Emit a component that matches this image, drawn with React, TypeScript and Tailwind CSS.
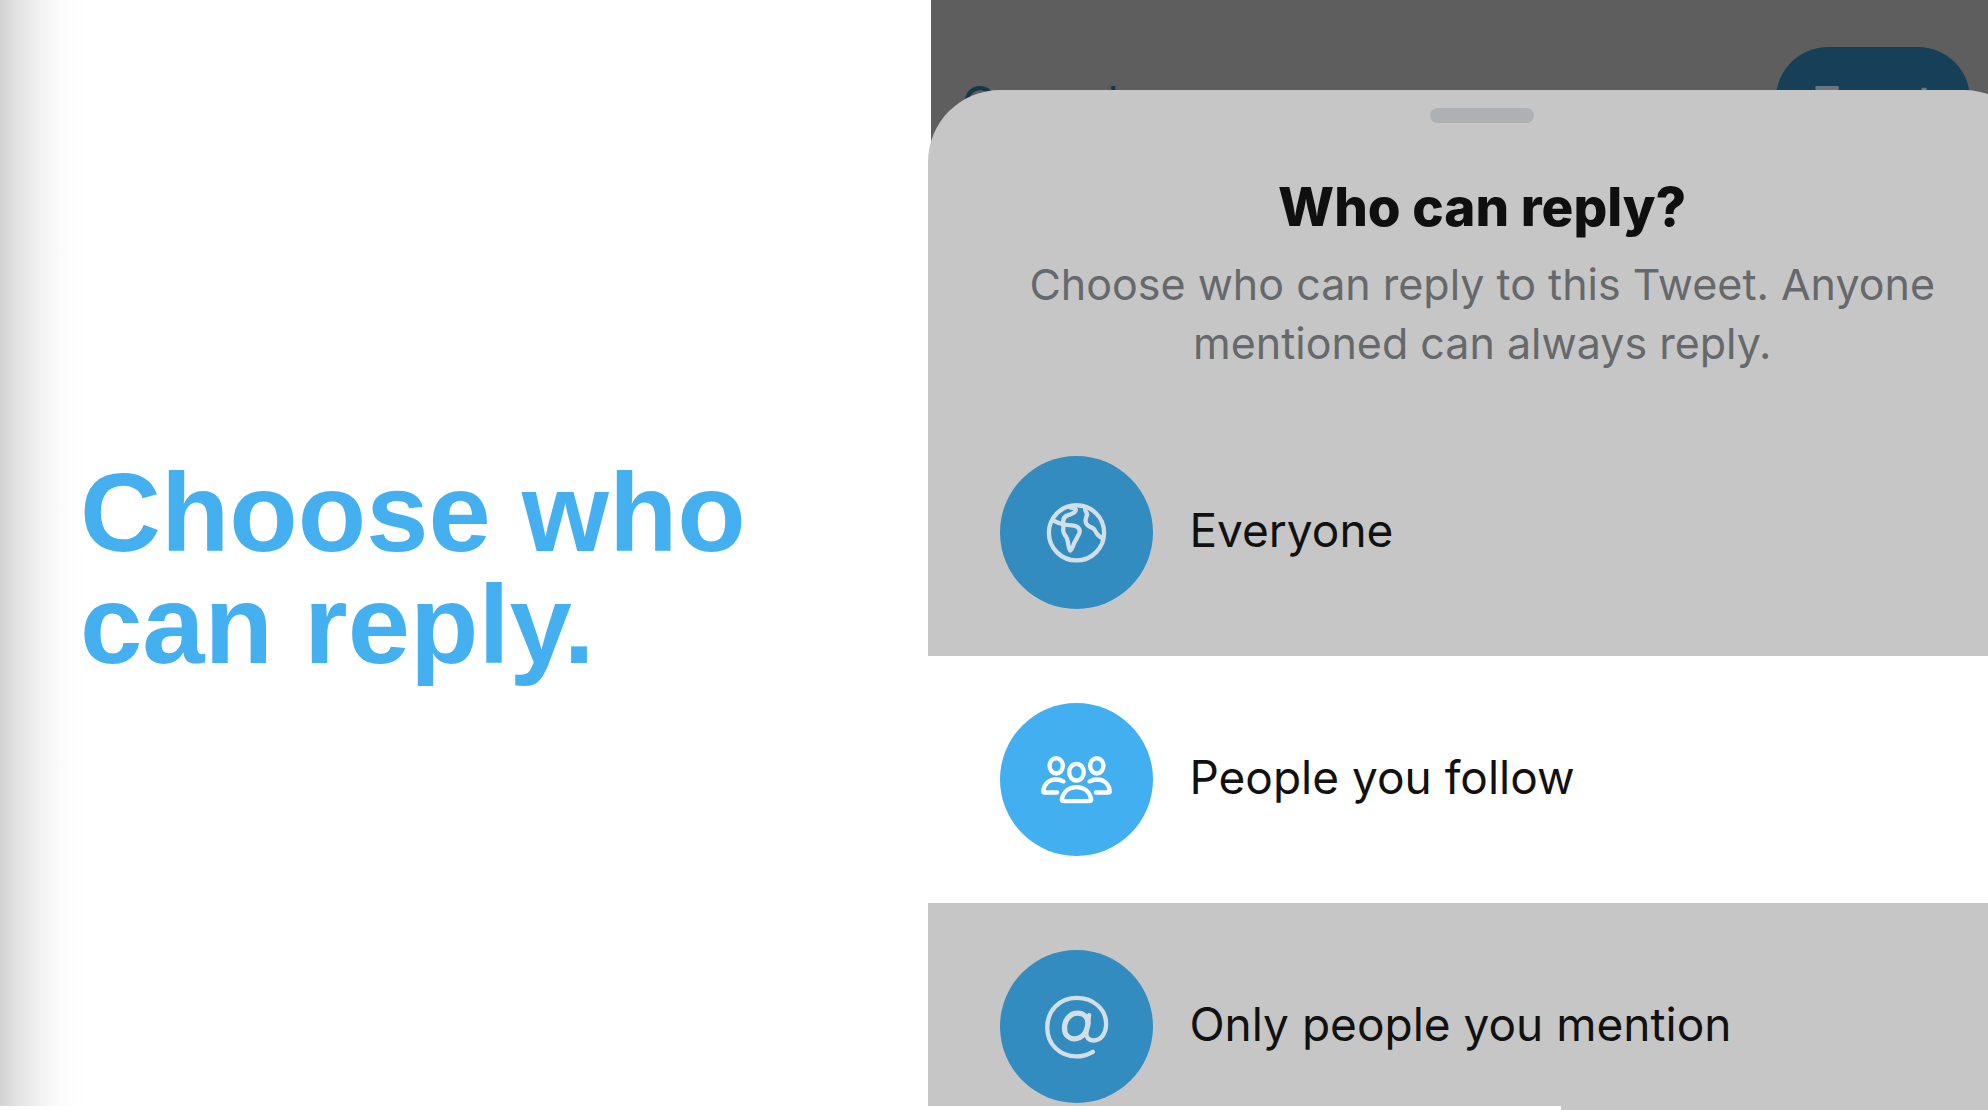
import React, { useState } from 'react';

const GlobeIcon = () => (
  <svg viewBox="0 0 460 460" fill="none" stroke="currentColor" strokeWidth="13" strokeLinejoin="round" strokeLinecap="round" className="size-full" aria-hidden="true">
    <circle cx="230" cy="231" r="83" />
    <path d="M158 193 C168 199 180 203 191 205 C187 190 194 181 207 177 C220 172 227 171 228 162 C226 155 218 157 211 154" />
    <path d="M191 205 C202 209 222 207 232 213 C243 220 241 231 234 241 C230 251 225 256 222 264 C219 274 217 281 211 284 C205 276 206 263 202 250 C199 238 189 235 190 224 Z" />
    <path d="M257 155 C253 164 261 169 262 176 C260 184 255 190 258 199 C259 209 270 212 279 217 C286 221 287 229 294 237 L303 245" />
  </svg>
);

const PeopleIcon = () => (
  <svg viewBox="0 0 460 460" fill="none" stroke="currentColor" strokeWidth="13" strokeLinejoin="round" strokeLinecap="round" className="size-full" aria-hidden="true">
    <ellipse cx="169" cy="189" rx="20" ry="23" />
    <ellipse cx="291" cy="189" rx="20" ry="23" />
    <ellipse cx="230" cy="208" rx="22" ry="25" />
    <path d="M172 269 H134 Q129 269 130 264 C133 242 148 230 169 230 Q181 230 191 236" />
    <path d="M288 269 H326 Q331 269 330 264 C327 242 312 230 291 230 Q279 230 269 236" />
    <path d="M190 295 H270 Q275 295 274 289 C269 265 252 253 230 253 C208 253 191 265 186 289 Q185 295 190 295 Z" />
  </svg>
);

const MentionIcon = () => (
  <svg viewBox="0 0 460 460" fill="none" stroke="currentColor" strokeLinejoin="round" strokeLinecap="round" className="size-full" aria-hidden="true">
    <path strokeWidth="13" d="M279 306 C262 316 247 320 229 320 C181 320 142 284 142 233 C142 181 180 144 231 144 C282 144 319 179 319 222 C319 252 303 272 281 272 C265 272 258 262 260 247 L268 196" />
    <path strokeWidth="16" d="M265 220 C264 202 251 190 233 190 C211 190 194 210 194 235 C194 255 207 267 224 267 C246 267 261 249 265 220 Z" />
  </svg>
);

const options = [
  { id: 'everyone', label: 'Everyone', Icon: GlobeIcon },
  { id: 'following', label: 'People you follow', Icon: PeopleIcon },
  { id: 'mentioned', label: 'Only people you mention', Icon: MentionIcon },
];

const ReplySheet = () => {
  const [selected, setSelected] = useState('following');

  return (
    <section className="relative -mt-20 -mr-12 rounded-t-[72px] bg-[#c6c6c6] pt-[18px]">
      <div className="mx-auto h-[15px] w-[104px] rounded-full bg-[#adb1b4]" />
      <div className="pt-[52px] pb-9 text-center">
        <h2 className="text-[53px] leading-[64px] font-extrabold text-[#0f0f0f]">Who can reply?</h2>
        <p className="mx-auto mt-4 max-w-[960px] text-[43px] leading-[59px] text-[#66696c]">
          Choose who can reply to this Tweet. Anyone mentioned can always reply.
        </p>
      </div>
      {options.map(({ id, label, Icon }) => (
        <button
          key={id}
          type="button"
          aria-pressed={selected === id}
          onClick={() => setSelected(id)}
          className={`flex w-full items-center gap-9 py-[47px] pl-[72px] text-left ${selected === id ? 'bg-white' : 'bg-[#c6c6c6]'}`}
        >
          <span
            className={`size-[153px] shrink-0 rounded-full ${selected === id ? 'bg-[#42aff0] text-white' : 'bg-[#328cbf] text-[#d3dfe7]'}`}
          >
            <Icon />
          </span>
          <span className="pb-1.5 text-[46px] leading-[60px] whitespace-nowrap text-[#111]">{label}</span>
        </button>
      ))}
    </section>
  );
};

const App = () => {
  return (
    <main className="relative flex h-screen overflow-hidden bg-white font-['Inter',sans-serif]">
      <div className="flex w-[928px] shrink basis-[46.7%] items-center bg-[linear-gradient(to_right,#d2d2d2_0px,#e4e4e4_18px,#f2f2f2_40px,#fbfbfb_60px,#ffffff_86px)] pl-20">
        <h1 className="pt-7 font-['Liberation_Sans',sans-serif] text-[112px] leading-[112px] font-bold text-[#45b0f0]">
          Choose who
          <br />
          can reply.
        </h1>
      </div>

      <div className="min-w-0 flex-1">
        <header className="ml-[3px] flex h-[170px] items-start justify-between bg-[#5e5e5e] pt-[47px] pr-[18px] pl-[30px]">
          <button type="button" className="text-[48px] leading-[114px] text-[#17384c]">
            Cancel
          </button>
          <button type="button" className="h-[104px] w-[194px] rounded-full bg-[#154058] pt-1 text-[40px] font-semibold text-[#6b7780]">
            Tweet
          </button>
        </header>
        <ReplySheet />
      </div>

      {/* playback position */}
      <div className="absolute bottom-0 left-0 h-1 w-[78.5%] bg-white" />
    </main>
  );
};

export default App;
